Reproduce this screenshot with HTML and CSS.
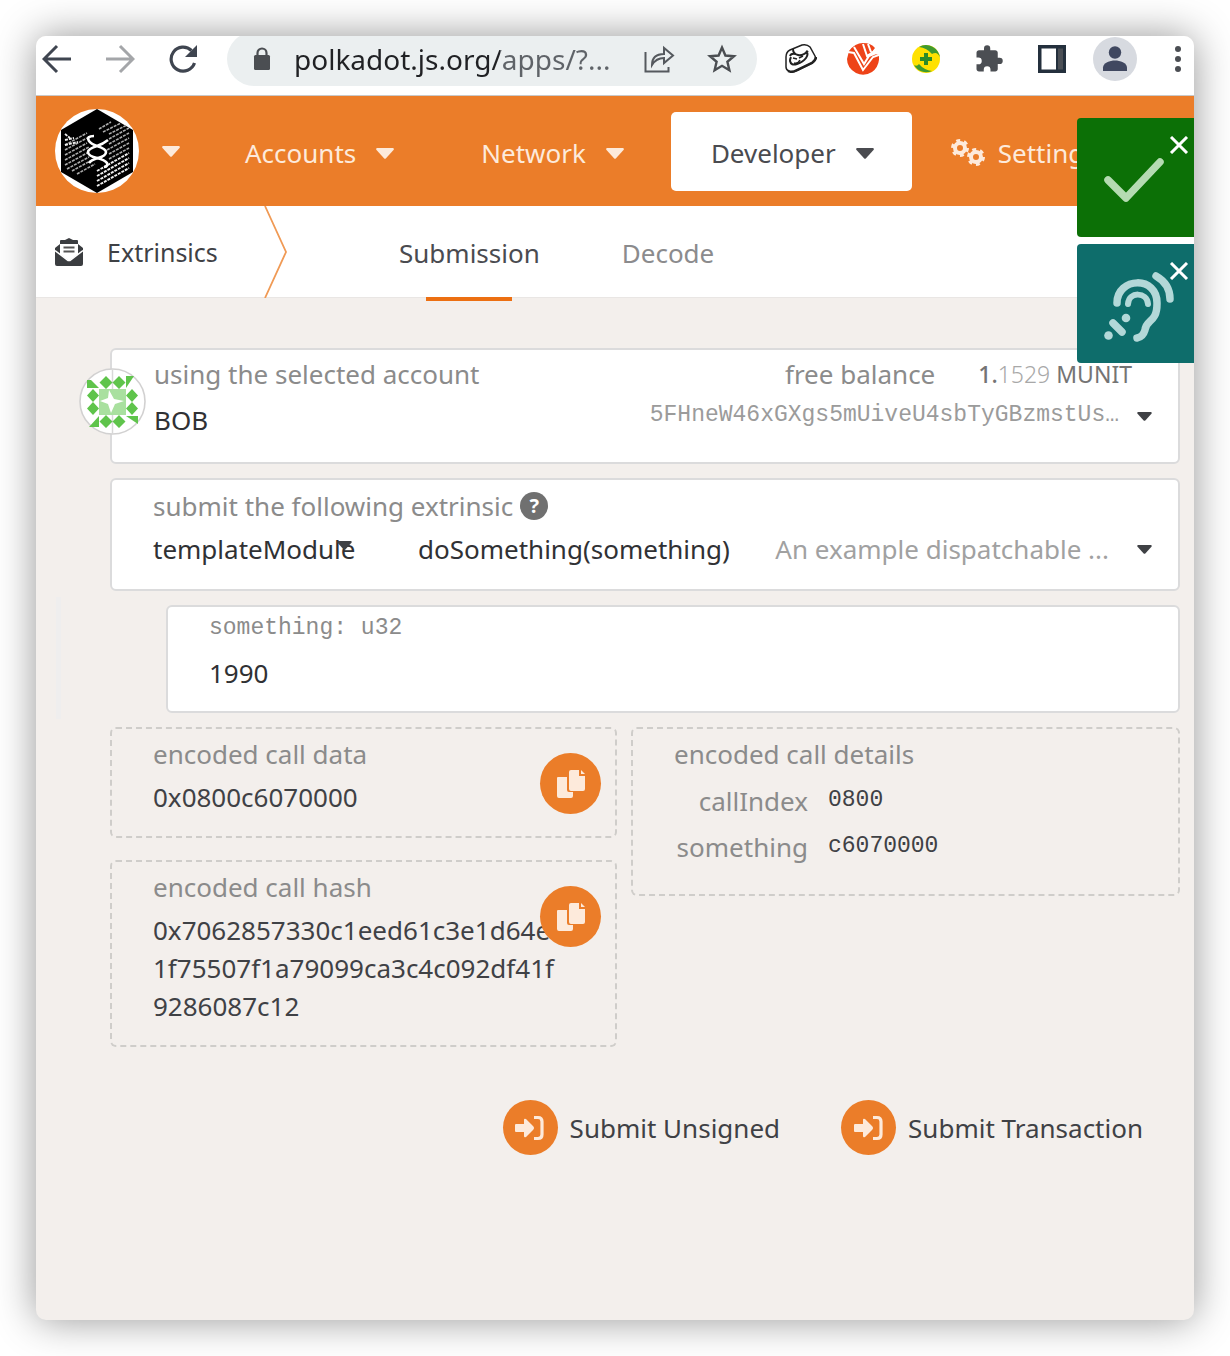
FILE: index.html
```html
<!DOCTYPE html>
<html lang="en">
<head>
<meta charset="utf-8">
<title>Extrinsics</title>
<meta name="viewport" content="width=device-width, initial-scale=1">
<link rel="stylesheet" href="styles.css">
</head>
<body>
<svg class="sprite" aria-hidden="true">
  <symbol id="caret" viewBox="0 0 18 11"><path d="M1 0h16q1.500 .8.500 2L10 10.300q-1 1-2 0L.5 2Q-.5.800 1 0z"/></symbol>
  <symbol id="close" viewBox="0 0 20 18"><path d="M2 1l16 16M18 1L2 17" fill="none" stroke="#fff" stroke-width="3"/></symbol>
  <symbol id="copy" viewBox="0 0 28 28"><path d="M1 7h9v13q0 2 2 2h4v4q0 2-2 2H2q-2 0-2-2V8q0-1 1-1z"/><path d="M14 0h8v6h6v13q0 2-2 2H14q-2 0-2-2V2q0-2 2-2zM24 0l4 4h-4z"/></symbol>
  <symbol id="signin" viewBox="0 0 30 26"><path d="M1 9h8V5q0-2 2-1l7 7q2 2 0 4l-7 7q-2 1-2-1v-4H1q-1 0-1-1v-6q0-1 1-1z"/><path d="M19 2.500h4q4 0 4 4v13q0 4-4 4h-4" fill="none" stroke="currentColor" stroke-width="3.200"/></symbol>
</svg>
<div class="window">
  <header class="browser">
    <button class="tool" aria-label="Back"><svg width="30" height="30" viewBox="0 0 30 30" fill="none" stroke="#3f4550" stroke-width="3"><path d="M29 15H3M15 2L2 15l13 13"/></svg></button>
    <button class="tool" aria-label="Forward"><svg width="30" height="30" viewBox="0 0 30 30" fill="none" stroke="#a4a6a9" stroke-width="3"><path d="M1 15h26M15 2l13 13-13 13"/></svg></button>
    <button class="tool reload" aria-label="Reload"><svg width="30" height="30" viewBox="0 0 30 30"><path d="M26.500 19A12 12 0 1 1 23.500 6.500" fill="none" stroke="#3f4550" stroke-width="3.200"/><path d="M29 1v12H17z" fill="#3f4550"/></svg></button>
    <div class="omnibox">
      <svg class="lock" width="18" height="24" viewBox="0 0 18 24"><rect x="1" y="8" width="16" height="15" rx="1.500" fill="#4b4e52"/><path d="M4.500 9V6a4.500 4.500 0 0 1 9 0v3" fill="none" stroke="#4b4e52" stroke-width="2.200"/></svg>
      <input class="url" type="text" aria-label="Address" value="polkadot.js.org/apps/?...">
      <button class="tool share" aria-label="Share"><svg width="31" height="28" viewBox="0 0 31 28" fill="none" stroke="#55595e" stroke-width="2"><path d="M1.500 7v19.500h23V22"/><path d="M8 20c0-8 4-11 12-11V3l9 7.500-9 7.500v-5c-6 0-9 2-12 7z"/></svg></button>
      <button class="tool" aria-label="Bookmark"><svg width="30" height="30" viewBox="0 0 30 30" fill="none" stroke="#4b4e52" stroke-width="2.400"><path d="M15 3.500l3.400 8 8.600.7-6.600 5.600 2 8.500L15 21.800l-7.400 4.500 2-8.500L3 12.200l8.600-.7z"/></svg></button>
    </div>
    <div class="extensions">
      <button class="tool" aria-label="Wallet extension"><svg width="33" height="29" viewBox="0 0 33 29" fill="none" stroke="#222"><path d="M2 13q0-5 4-7L18 1q5-1 8 2l5 9q2 4-3 7L12 27q-4 2-7 0-3-1-3-4z" fill="#fff" stroke-width="1.500"/><path d="M4 27q4 2 9-1l15-7q4-3 4-6" stroke-width="2.500"/><path d="M9 5q0 5 5 6t10-4M6 12q1-3 5-2M22 7q3 3 0 7t-9 6q-6 2-7-3 0-2 1-4" stroke-width="2"/><path d="M9 14l4 1M15 14l4-2M10 19q4 1 6-3" stroke-width="1.500"/></svg></button>
      <button class="tool" aria-label="Video extension"><svg width="32" height="32" viewBox="0 0 32 32"><path d="M2 8Q8 0 16 0t12 5l-4 5 8 2q1 11-7 17-8 5-16 1Q0 25 0 16z" fill="#ee4318"/><path d="M1 9l6 1 9 17L26 14l6-2M7 4l10 17 5-8 7-3M16 1l4 12 6-4M21 1l3 8" fill="none" stroke="#fff" stroke-width="2"/></svg></button>
      <button class="tool" aria-label="Security extension"><svg width="28" height="28" viewBox="0 0 28 28"><circle cx="14" cy="14" r="14" fill="#ffe100"/><path d="M7 2A14 14 0 0 1 28 13q-1-4-4-5-3 0-4 1Q15 3 7 2zM2 20q3 2 5-1 5 6 13 7A14 14 0 0 1 2 20z" fill="#3f9a2f"/><path d="M14 8v12M8 14h12" stroke="#2c8b28" stroke-width="4"/></svg></button>
      <button class="tool" aria-label="Extensions"><svg width="30" height="30" viewBox="0 0 24 24" fill="#4b4e53"><path d="M20.500 11H19V7c0-1.100-.9-2-2-2h-4V3.500a2.500 2.500 0 0 0-5 0V5H4c-1.100 0-2 .9-2 2v3.800h1.500a2.700 2.700 0 0 1 0 5.400H2V20c0 1.100.9 2 2 2h3.800v-1.500a2.700 2.700 0 0 1 5.400 0V22H17c1.100 0 2-.9 2-2v-4h1.500a2.500 2.500 0 0 0 0-5z"/></svg></button>
      <button class="tool" aria-label="Side panel"><svg width="28" height="28" viewBox="0 0 28 28"><path d="M0 0h28v28H0z" fill="#24303d"/><path d="M3.500 3.500H18v21H3.500z" fill="#fff"/><path d="M20 3.500h5v21h-5z" fill="#4b4f55"/></svg></button>
      <button class="tool avatar" aria-label="Profile"><svg width="26" height="26" viewBox="0 0 26 26" fill="#404860"><circle cx="13" cy="6.500" r="6.200"/><path d="M1 25v-3.500C1 17 8 14.500 13 14.500S25 17 25 21.500V25z"/></svg></button>
      <button class="tool" aria-label="Menu"><svg width="6" height="26" viewBox="0 0 6 26" fill="#4b4e53"><circle cx="3" cy="3" r="3"/><circle cx="3" cy="13" r="3"/><circle cx="3" cy="23" r="3"/></svg></button>
    </div>
  </header>

  <nav class="menu">
    <button class="chain" aria-label="Switch network">
      <svg width="84" height="84" viewBox="0 0 84 84">
        <circle cx="42" cy="42" r="42" fill="#fff"/>
        <path d="M42 0l36 21v42L42 84 6 63V21z" fill="#000"/>
        <g fill="none" stroke-dasharray="3 1">
          <path d="M10 36l22-12M10 41l22-12M10 46l22-12M10 51l24-13M10 56l24-13M12 60l22-12M17 62l20-11M22 65l18-10M44 20l12-7M48 23l18-9M54 25l18-9M54 30l20-11M54 35l20-11M52 41l22-12M54 45l20-11M54 50l20-11" stroke="#aaa" stroke-width="1.600"/>
          <path d="M42 62l32-18M42 67l32-18M42 72l32-18M42 77l32-18M10 25l5 4M10 31l9-2M10 36l13-3" stroke="#eee" stroke-width="1.900"/>
        </g>
        <path d="M39 27q-8 0-5 5 2 3 8 5 9 3 9 6 0 4-8 6-7 2-9 5M53 31q-5 4-11 6-9 3-9 6 0 4 9 6 8 2 10 5 1 4-3 4" fill="none" stroke="#fff" stroke-width="2.600"/>
      </svg>
      <svg class="caret"><use href="#caret"/></svg>
    </button>
    <button class="item">Accounts<svg class="caret"><use href="#caret"/></svg></button>
    <button class="item">Network<svg class="caret"><use href="#caret"/></svg></button>
    <button class="item active">Developer<svg class="caret"><use href="#caret"/></svg></button>
    <a class="item settings" href="#settings"><svg width="34" height="30" viewBox="0 0 34 30" fill="none" stroke="#fdeadb"><circle cx="9" cy="10" r="5" stroke-width="4"/><circle cx="9" cy="10" r="7.500" stroke-width="3" stroke-dasharray="3.900 3.950"/><circle cx="25" cy="19" r="5" stroke-width="4"/><circle cx="25" cy="19" r="7.500" stroke-width="3" stroke-dasharray="3.900 3.950"/></svg>Settings</a>
  </nav>

  <nav class="tabs">
    <h1 class="section"><svg width="28" height="28" viewBox="0 0 28 28"><path d="M0 10L5 6V3q0-1 1-1h4l4-2 4 2h4q1 0 1 1v3l5 4v16q0 2-2 2H2q-2 0-2-2z" fill="#3b3d40"/><path d="M5 6h18v10l-9 7-9-7z" fill="#fff"/><path d="M0 12.500l13 10h2l13-10" fill="none" stroke="#fff" stroke-width="1.500"/><path d="M8.500 9.500h11M8.500 13.500h11" stroke="#555" stroke-width="2"/></svg>Extrinsics</h1>
    <svg class="chevron" width="24" height="92" viewBox="0 0 24 92"><path d="M1 0l21 46L1 92" fill="none" stroke="#f09a55" stroke-width="1.800"/></svg>
    <a class="tab current" href="#submission">Submission</a>
    <a class="tab" href="#decode">Decode</a>
  </nav>

  <main class="content">
    <section class="panel account">
      <svg class="identicon" width="67" height="67" viewBox="0 0 67 67">
        <circle cx="33.500" cy="33.500" r="32.500" fill="#fff" stroke="#d2d1d1" stroke-width="1.600"/>
        <path d="M33.500 1v65" stroke="#d8d8d8" stroke-width="1.500"/>
        <g fill="#5fc44b">
          <path d="M8 20V12l4 0 8 8zM47 20V8h8zM10 59l10-11v11zM47 48h12v8z"/>
          <path d="M27 8l6.500 6.500L40 8l6.500 6.500L40 21l-6.500-6.500L27 21l-6.500-6.500zM27 47l6.500 6.500L40 47l6.500 6.500L40 60l-6.500-6.500L27 60l-6.500-6.500zM14 21l6 6.500-6 6.500-6-6.500zM14 34l6 6.500-6 6.500-6-6.500zM53 21l6 6.500-6 6.500-6-6.500zM53 34l6 6.500-6 6.500-6-6.500z"/>
        </g>
        <path d="M20 21h27v26H20z" fill="#a9e09f"/><path d="M30 22l5 9 10 2-9 3-4 9-3-9-8-3 8-3z" fill="#fff"/>
      </svg>
      <div class="line">
        <label class="label" for="account">using the selected account</label>
        <div class="balance"><span class="label">free balance</span><span class="amount"><b>1.</b><i>1529</i> MUNIT</span></div>
      </div>
      <div class="line picker">
        <select class="value" id="account"><option>BOB</option></select>
        <span class="mono address">5FHneW46xGXgs5mUiveU4sbTyGBzmstUs…</span>
        <svg class="caret small"><use href="#caret"/></svg>
      </div>
    </section>

    <section class="panel extrinsic">
      <div class="line start">
        <label class="label" for="module">submit the following extrinsic</label>
        <button class="help" aria-label="Help">?</button>
      </div>
      <div class="line call">
        <div class="module"><select class="value" id="module"><option>templateModule</option></select><svg class="caret small"><use href="#caret"/></svg></div>
        <select class="value method" aria-label="Method"><option>doSomething(something)</option></select>
        <span class="hint">An example dispatchable ...</span>
        <svg class="caret small"><use href="#caret"/></svg>
      </div>
    </section>

    <div class="params">
      <section class="panel param">
        <label class="mono" for="something">something: u32</label>
        <input class="value" id="something" type="text" value="1990">
      </section>
    </div>

    <div class="encoded">
      <div class="column">
        <section class="outline">
          <h2 class="label">encoded call data</h2>
          <p class="hex">0x0800c6070000</p>
          <button class="copy" aria-label="Copy call data"><svg width="28" height="28"><use href="#copy"/></svg></button>
        </section>
        <section class="outline">
          <h2 class="label">encoded call hash</h2>
          <p class="hex">0x7062857330c1eed61c3e1d64e<br>1f75507f1a79099ca3c4c092df41f<br>9286087c12</p>
          <button class="copy" aria-label="Copy call hash"><svg width="28" height="28"><use href="#copy"/></svg></button>
        </section>
      </div>
      <section class="outline details">
        <h2 class="label">encoded call details</h2>
        <dl>
          <dt>callIndex</dt><dd>0800</dd>
          <dt>something</dt><dd>c6070000</dd>
        </dl>
      </section>
    </div>

    <div class="actions">
      <button class="action"><span class="round"><svg width="30" height="26"><use href="#signin"/></svg></span>Submit Unsigned</button>
      <button class="action"><span class="round"><svg width="30" height="26"><use href="#signin"/></svg></span>Submit Transaction</button>
    </div>
  </main>

  <aside class="toasts">
    <div class="toast success">
      <svg width="60" height="44" viewBox="0 0 60 44"><path d="M4 22l18 18L56 4" fill="none" stroke="#b5dbb2" stroke-width="7.500" stroke-linecap="round" stroke-linejoin="round"/></svg>
      <button class="close" aria-label="Close"><svg width="20" height="18"><use href="#close"/></svg></button>
    </div>
    <div class="toast event">
      <svg width="70" height="70" viewBox="0 0 70 70" fill="none" stroke="#b3d8d8" stroke-width="7.500" stroke-linecap="round" stroke-linejoin="round"><path d="M13 31c0-26 41-28 40 1 0 19-11 15-12 26q-2 7-8 8"/><path d="M24 32c1-13 19-12 20 0" stroke-width="6"/><path d="M52 4q14 8 14 23M9 51l9 9"/><g fill="#b3d8d8" stroke="none"><circle cx="22" cy="46" r="4.300"/><circle cx="4.500" cy="63.500" r="4.300"/></g></svg>
      <button class="close" aria-label="Close"><svg width="20" height="18"><use href="#close"/></svg></button>
    </div>
  </aside>
</div>
</body>
</html>
```
FILE: styles.css
```css
* { box-sizing: border-box; }

body {
  margin: 0;
  padding: 36px;
  background: #fff;
  color: #3f4145;
  font: 26px/36px "Noto Sans", "Open Sans", sans-serif;
}

button, select, input {
  margin: 0;
  padding: 0;
  border: 0;
  background: none;
  color: inherit;
  font: inherit;
}

select { appearance: none; }
a { color: inherit; text-decoration: none; }
h1, h2, p, dl, dd { margin: 0; font: inherit; }
svg { display: block; flex: none; }
.sprite { position: absolute; width: 0; height: 0; }

.window {
  position: relative;
  display: flex;
  flex-direction: column;
  min-height: calc(100vh - 72px);
  overflow: hidden;
  border-radius: 10px;
  background: #f3efec;
  box-shadow: 0 0 40px rgba(0, 0, 0, .42);
}

/* Browser toolbar */
.browser {
  display: flex;
  align-items: center;
  height: 60px;
  padding: 0 1px 14px 6px;
  border-bottom: 1px solid #c9c9c9;
  background: #fff;
}

.tool { display: flex; align-items: center; justify-content: center; margin-right: 33px; }
.tool.reload { margin-right: 29px; }

.omnibox {
  display: flex;
  flex: 1;
  align-items: center;
  min-width: 0;
  height: 54px;
  padding: 0 20px 0 26px;
  border-radius: 27px;
  background: #ebeff0;
}

.lock { margin-right: 23px; }

.url {
  flex: 1;
  min-width: 0;
  background: linear-gradient(90deg, #202124 206px, #5f6368 206px) text;
  color: transparent;
  font-size: 28px;
}

.omnibox .tool { margin-right: 0; }
.omnibox .share { margin: 0 32px 0 20px; }
.extensions { display: flex; align-items: center; gap: 33px; margin-left: 28px; }
.extensions .tool { width: 30px; margin: 0; }
.extensions .avatar { width: 44px; height: 44px; margin: 0 -7px; border-radius: 50%; background: #d7dae0; }

/* Main navigation */
.menu {
  display: flex;
  align-items: center;
  gap: 9px;
  height: 110px;
  padding-left: 19px;
  background: #eb7d29;
  color: #fdeadb;
}

.caret { width: 18px; height: 11px; fill: currentColor; }
.caret.small { width: 15px; height: 9px; }
.chain { display: flex; align-items: center; gap: 23px; margin-right: 16px; }

.item {
  display: flex;
  align-items: center;
  gap: 20px;
  height: 79px;
  padding: 4px 38px 0 40px;
  border-radius: 5px;
}

.item.active { background: #fff; color: #4a4b50; }
.item.settings { gap: 13px; padding: 4px 30px 0; }

/* Section tabs */
.tabs {
  display: flex;
  align-items: center;
  height: 92px;
  padding-left: 19px;
  border-bottom: 1px solid #e9e6e4;
  background: #fff;
}

.section { display: flex; align-items: center; gap: 24px; width: 209px; font-size: 25px; }
.chevron { margin-right: 70px; }

.tab {
  position: relative;
  display: flex;
  align-items: center;
  height: 92px;
  padding: 3px 41px 0;
  color: #8b8b8d;
}

.tab.current { color: #4a4b50; }

.tab.current::after {
  content: "";
  position: absolute;
  left: 50%;
  bottom: -3px;
  width: 86px;
  height: 4px;
  background: #ec6f12;
  transform: translateX(-50%);
}

/* Form */
.content { display: flex; flex-direction: column; padding: 50px 14px 60px 74px; }

.panel {
  position: relative;
  border: 2px solid #dbdbdc;
  border-radius: 6px;
  background: #fff;
}

.line { display: flex; align-items: center; justify-content: space-between; }
.line.start { justify-content: flex-start; gap: 7px; }
.label { color: #8b8b8b; line-height: 36px; }
.value { color: #303134; line-height: 36px; height: 36px; }
.mono { color: #8b8b8b; font-family: "Liberation Mono", monospace; font-size: 23px; line-height: 30px; }

.account { padding: 6px 26px 24px 42px; }
.balance { display: flex; gap: 43px; padding-right: 20px; }
.amount { color: #747474; font-size: 23px; }
.amount b { font-weight: 500; }
.amount i { color: #a8a8a8; font-style: normal; font-weight: 300; }
.picker { gap: 18px; padding-top: 2px; align-items: center; }
.picker .value { flex: 1; margin-top: 8px; }
.picker .mono { margin-bottom: 2px; color: #9b9b9b; }
.identicon { position: absolute; left: -33px; top: 18px; }

.extrinsic { margin-top: 14px; padding: 8px 26px 22px 41px; }

.help {
  width: 28px;
  height: 28px;
  border-radius: 50%;
  background: #707070;
  color: #fff;
  font-size: 20px;
  font-weight: 700;
  line-height: 28px;
}

.call { margin-top: 7px; gap: 28px; }
.module { position: relative; width: 237px; }
.module .caret { position: absolute; left: 184px; top: 10px; }
.method { flex: 1; min-width: 0; }
.hint { color: #a1a1a1; }

.params { margin: 6px 0 8px -54px; padding: 8px 0 6px 105px; border-left: 5px solid #efeeee; }
.param { display: flex; flex-direction: column; padding: 6px 41px 20px; }
.param .value { margin-top: 12px; width: 100%; }

/* Encoded output */
.encoded { display: grid; grid-template-columns: 507px 1fr; gap: 14px; align-items: start; }
.column { display: grid; gap: 22px; }
.outline { position: relative; padding: 7px 41px 20px; border: 2px dashed #cfcdca; border-radius: 6px; }
.hex { margin-top: 6px; line-height: 38px; }

.copy {
  position: absolute;
  top: 24px;
  right: 14px;
  display: flex;
  align-items: center;
  justify-content: center;
  width: 61px;
  height: 61px;
  border-radius: 50%;
  background: #eb7d29;
  fill: #fdeadb;
}

dl { display: grid; grid-template-columns: 134px 1fr; column-gap: 20px; padding: 6px 0 4px; line-height: 46px; }
dt { color: #8b8b8b; text-align: right; }
dd { font-family: "Liberation Mono", monospace; font-size: 23px; line-height: 44px; }

.actions { display: flex; justify-content: flex-end; gap: 61px; margin-top: 53px; padding-right: 37px; }
.action { display: flex; align-items: center; gap: 12px; }
.round {
  display: flex;
  align-items: center;
  justify-content: center;
  width: 55px;
  height: 55px;
  border-radius: 50%;
  background: #eb7d29;
  color: #fdeadb;
  fill: currentColor;
}

/* Notifications float above the page */
.toasts { position: absolute; top: 82px; right: 0; display: grid; gap: 7px; }
.toast { position: relative; width: 117px; height: 119px; padding: 40px 0 0 27px; border-radius: 4px 0 0 4px; }
.success { background: #0c7006; }
.event { padding-top: 28px; background: #0e6d6b; }
.close { position: absolute; top: 18px; right: 5px; }
```
